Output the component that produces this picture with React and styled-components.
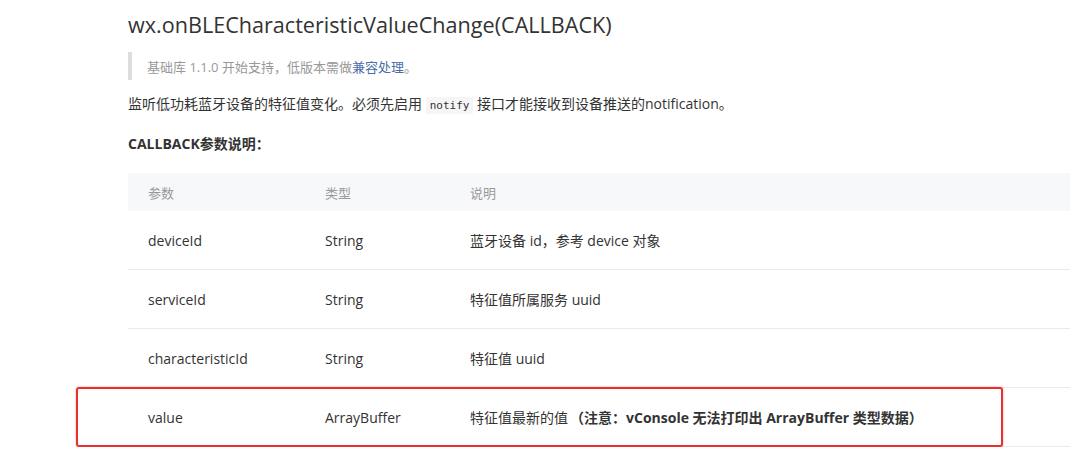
import React from 'react'
import styled, { createGlobalStyle } from 'styled-components'

const rows = [
  { name: 'deviceId', type: 'String', desc: '蓝牙设备 id，参考 device 对象' },
  { name: 'serviceId', type: 'String', desc: '特征值所属服务 uuid' },
  { name: 'characteristicId', type: 'String', desc: '特征值 uuid' },
  {
    name: 'value',
    type: 'ArrayBuffer',
    desc: '特征值最新的值',
    note: '（注意：vConsole 无法打印出 ArrayBuffer 类型数据）',
    marked: true,
  },
]

const GlobalStyle = createGlobalStyle`
  html, body {
    margin: 0;
    padding: 0;
    background: #fff;
  }
  body {
    font-family: "Open Sans", "Noto Sans CJK SC", sans-serif;
    color: #333;
  }
`

const App = () => (
  <Page>
    <GlobalStyle />
    <Title>wx.onBLECharacteristicValueChange(CALLBACK)</Title>
    <Quote>
      基础库 1.1.0 开始支持，低版本需做<Link>兼容处理</Link>。
    </Quote>
    <Para>
      监听低功耗蓝牙设备的特征值变化。必须先启用 <Code>notify</Code> 接口才能接收到设备推送的notification。
    </Para>
    <SubTitle>CALLBACK参数说明：</SubTitle>
    <Table>
      <HeadRow>
        <HeadCell>参数</HeadCell>
        <HeadCell>类型</HeadCell>
        <HeadCell>说明</HeadCell>
      </HeadRow>
      {rows.map((r) => (
        <Row key={r.name}>
          <Cell>{r.name}</Cell>
          <Cell>{r.type}</Cell>
          <Cell>
            {r.desc}
            {r.note && <Note>{r.note}</Note>}
          </Cell>
          {r.marked && <Mark />}
        </Row>
      ))}
    </Table>
  </Page>
)

const Page = styled.div`
  padding: 8px 10px 0 128px;
`
const Title = styled.h1`
  margin: 0;
  font-size: 21.6px;
  font-weight: 400;
  line-height: 34px;
  color: #333;
`
const Quote = styled.div`
  margin-top: 10px;
  border-left: 4px solid #ddd;
  padding-left: 15px;
  height: 28px;
  display: flex;
  align-items: center;
  font-size: 13px;
  color: #999;
`
const Link = styled.span`
  color: #4a6ea8;
`
const Para = styled.p`
  margin: 14px 0 0;
  font-size: 14px;
  line-height: 20px;
  color: #333;
`
const Code = styled.code`
  font-family: "DejaVu Sans Mono", monospace;
  font-size: 11px;
  background: #f6f6f6;
  padding: 2px 4px;
  color: #333;
`
const SubTitle = styled.div`
  margin-top: 18px;
  font-size: 14px;
  font-weight: 700;
  line-height: 20px;
`
const Table = styled.div`
  margin-top: 19px;
  width: 942px;
`
const HeadRow = styled.div`
  display: grid;
  grid-template-columns: 177px 145px 1fr;
  height: 38px;
  align-items: center;
  background: #f7f8fa;
  padding-left: 20px;
`
const HeadCell = styled.div`
  font-size: 13px;
  color: #999;
`
const Row = styled.div`
  position: relative;
  display: grid;
  grid-template-columns: 177px 145px 1fr;
  height: 58px;
  align-items: center;
  padding-left: 20px;
  border-bottom: 1px solid #eaeaea;
`
const Cell = styled.div`
  font-size: 14px;
  color: #333;
`
const Note = styled.b`
  margin-left: 2px;
  font-weight: 700;
`
const Mark = styled.div`
  position: absolute;
  left: -52px;
  right: 67px;
  top: -1px;
  bottom: -1px;
  border: 2px solid #e8302c;
  border-radius: 3px;
  box-shadow: 0 0 2px rgba(232, 48, 44, 0.5);
`

export default App
